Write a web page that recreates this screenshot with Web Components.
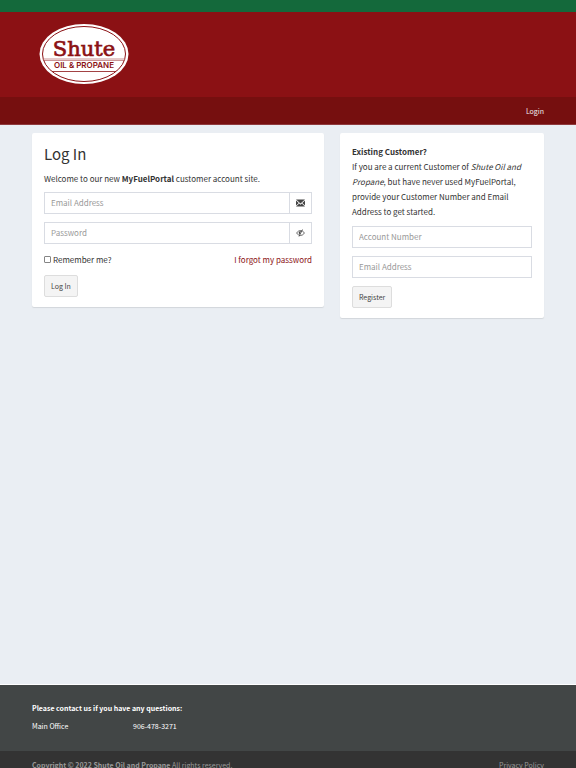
<!DOCTYPE html>
<html lang="en">
<head>
<meta charset="utf-8">
<meta name="viewport" content="width=device-width, initial-scale=1">
<title>Log In - MyFuelPortal</title>
<style>
  body{
    margin:0; background:#eaeef3; color:#333;
    font-family:"Noto Sans CJK SC", "Open Sans", sans-serif;
    font-size:8px; line-height:15px;
  }
</style>
</head>
<body>
<portal-page>
  <site-header slot="header"></site-header>
  <panel-card class="login"><login-form></login-form></panel-card>
  <panel-card class="register"><register-form></register-form></panel-card>
  <site-footer slot="footer"></site-footer>
</portal-page>

<script>
function define(name, html, setup) {
  const template = document.createElement("template");
  template.innerHTML = html;

  customElements.define(name, class extends HTMLElement {
    constructor() {
      super();
      this.attachShadow({ mode: "open" });
      this.shadowRoot.appendChild(template.content.cloneNode(true));
      if (setup) setup(this);
    }
  });
}

define("portal-page", `
  <style>
    :host{ display:block; }
    main{
      display:grid; grid-template-columns:repeat(12, minmax(0, 1fr)); column-gap:16px;
      align-items:start; align-content:start;
      box-sizing:border-box; padding:8px 32px;
      min-height:calc(100vh - 208px);
      border-bottom:1px solid #fff;
    }
    ::slotted(.login){ grid-column:span 7; }
    ::slotted(.register){ grid-column:span 5; }
  </style>
  <slot name="header"></slot>
  <main><slot></slot></main>
  <slot name="footer"></slot>
`);

define("brand-logo", `
  <style>
    :host{ display:block; }
    a, svg{ display:block; }
    a{ width:90px; }
  </style>
  <a href="#" aria-label="Shute Oil &amp; Propane">
    <svg width="90" height="62" viewBox="0 0 90 62">
      <ellipse cx="45" cy="31" rx="44.5" ry="30" fill="#fff"/>
      <ellipse cx="45" cy="31" rx="41.5" ry="27.5" fill="none" stroke="#8b1114" stroke-width="1"/>
      <path d="M5 36H85M5 37.500H85" stroke="#8b1114" stroke-width=".6" opacity=".75"/>
      <path d="M13 48.500H77" stroke="#8b1114" stroke-width=".8"/>
      <text x="45" y="33" text-anchor="middle" font-family="DejaVu Serif, serif" font-size="21" fill="#8b1114" stroke="#8b1114" stroke-width=".7">Shute</text>
      <text x="45" y="45" text-anchor="middle" font-family="Inter, sans-serif" font-weight="600" font-size="8" fill="#8b1114">OIL &amp; PROPANE</text>
    </svg>
  </a>
`);

define("site-header", `
  <style>
    :host{ display:block; background:#8b1114; border-top:12px solid #14693b; }
    .brand{ padding:11px 39px 12px; }
    nav{
      display:flex; justify-content:flex-end;
      padding:7px 32px 5px; background:#760f0f; border-bottom:1px solid #8f3a3d;
    }
    nav a{ color:#eee; text-decoration:none; font-size:7px; line-height:15px; }
  </style>
  <div class="brand"><brand-logo></brand-logo></div>
  <nav><a href="#">Login</a></nav>
`);

define("panel-card", `
  <style>
    :host{
      display:block; box-sizing:border-box; padding:11px 12px 10px;
      background:#fff; border-radius:2px;
      box-shadow:0 1px 1px rgba(0,0,0,0.1);
    }
  </style>
  <slot></slot>
`);

define("text-field", `
  <style>
    :host{
      display:flex; box-sizing:border-box; height:22px; margin-bottom:8px;
      border:1px solid #d9dce3; background:#fff;
    }
    input{
      flex:1; min-width:0; box-sizing:border-box; margin:0; padding:0 6px 2px;
      border:0; outline:0; background:none;
      color:#555; font:inherit;
    }
    input::placeholder{ color:#999; opacity:1; }
    ::slotted(svg){
      flex:none; box-sizing:border-box; width:22px; height:20px; padding:5px 6px;
      border-left:1px solid #d9dce3; color:#444;
    }
  </style>
  <input>
  <slot></slot>
`, host => {
  const input = host.shadowRoot.querySelector("input");
  input.type = host.getAttribute("type") || "text";
  input.placeholder = host.getAttribute("label");
  input.setAttribute("aria-label", host.getAttribute("label"));
});

define("plain-button", `
  <style>
    :host{ display:block; }
    button{
      display:block; box-sizing:border-box; height:22px; margin:0; padding:0 6px;
      border:1px solid #ddd; border-radius:2px; background:#f4f4f4;
      color:#444; font-family:inherit; font-size:7px; line-height:15px; cursor:pointer;
    }
  </style>
  <button type="button"><slot></slot></button>
`);

define("login-form", `
  <style>
    :host{ display:block; }
    h1{ margin:0 0 7px; font-size:15px; line-height:20px; font-weight:400; }
    p{ margin:0 0 6px; }
    .row{ display:flex; justify-content:space-between; align-items:center; margin:0 0 8px; }
    label{ display:flex; align-items:center; gap:2px; }
    input{
      appearance:none; box-sizing:border-box; width:7px; height:7px; margin:0;
      border:1px solid #858585; border-radius:1px; background:#fff;
    }
    input:checked{ background:#8b1114; }
    a{ color:#8b1114; text-decoration:none; }
  </style>
  <h1>Log In</h1>
  <p>Welcome to our new <b>MyFuelPortal</b> customer account site.</p>
  <text-field type="email" label="Email Address">
    <svg viewBox="0 0 18 18" aria-hidden="true">
      <path d="M0 2h18L9 10Z M0 4l5.500 5L0 14Z M18 4l-5.500 5L18 14Z M0 16l6.500-6L9 12.500l2.500-2.500L18 16Z" fill="currentColor"/>
    </svg>
  </text-field>
  <text-field type="password" label="Password">
    <svg viewBox="0 0 18 18" aria-hidden="true">
      <g fill="none" stroke="currentColor" stroke-width="1.600">
        <path d="M1 9Q9-1 17 9Q9 19 1 9Z"/>
        <path d="M13 2L6 16"/>
      </g>
      <path d="M10 5A4 4 0 0 0 7 12Z" fill="currentColor"/>
    </svg>
  </text-field>
  <div class="row">
    <label><input type="checkbox">Remember me?</label>
    <a href="#">I forgot my password</a>
  </div>
  <plain-button>Log In</plain-button>
`);

define("register-form", `
  <style>
    :host{ display:block; }
    p{ margin:0 0 7px; }
  </style>
  <p><b>Existing Customer?</b><br>If you are a current Customer of <i>Shute Oil and Propane</i>, but have never used MyFuelPortal, provide your Customer Number and Email Address to get started.</p>
  <text-field label="Account Number"></text-field>
  <text-field type="email" label="Email Address"></text-field>
  <plain-button>Register</plain-button>
`);

define("site-footer", `
  <style>
    :host{ display:block; font-size:7px; line-height:15px; }
    .contact{ padding:16px 32px 17px; background:#424646; color:#fff; }
    .contact b{ display:block; margin-bottom:3px; }
    .office{ display:grid; grid-template-columns:101px 1fr; }
    .legal{
      display:flex; justify-content:space-between;
      padding:7px 32px; background:#333; color:#999;
    }
    a{ color:inherit; text-decoration:none; }
  </style>
  <div class="contact">
    <b>Please contact us if you have any questions:</b>
    <div class="office"><span>Main Office</span><span>906-478-3271</span></div>
  </div>
  <div class="legal">
    <span><b>Copyright © 2022 Shute Oil and Propane</b> All rights reserved.</span>
    <a href="#">Privacy Policy</a>
  </div>
`);
</script>
</body>
</html>
